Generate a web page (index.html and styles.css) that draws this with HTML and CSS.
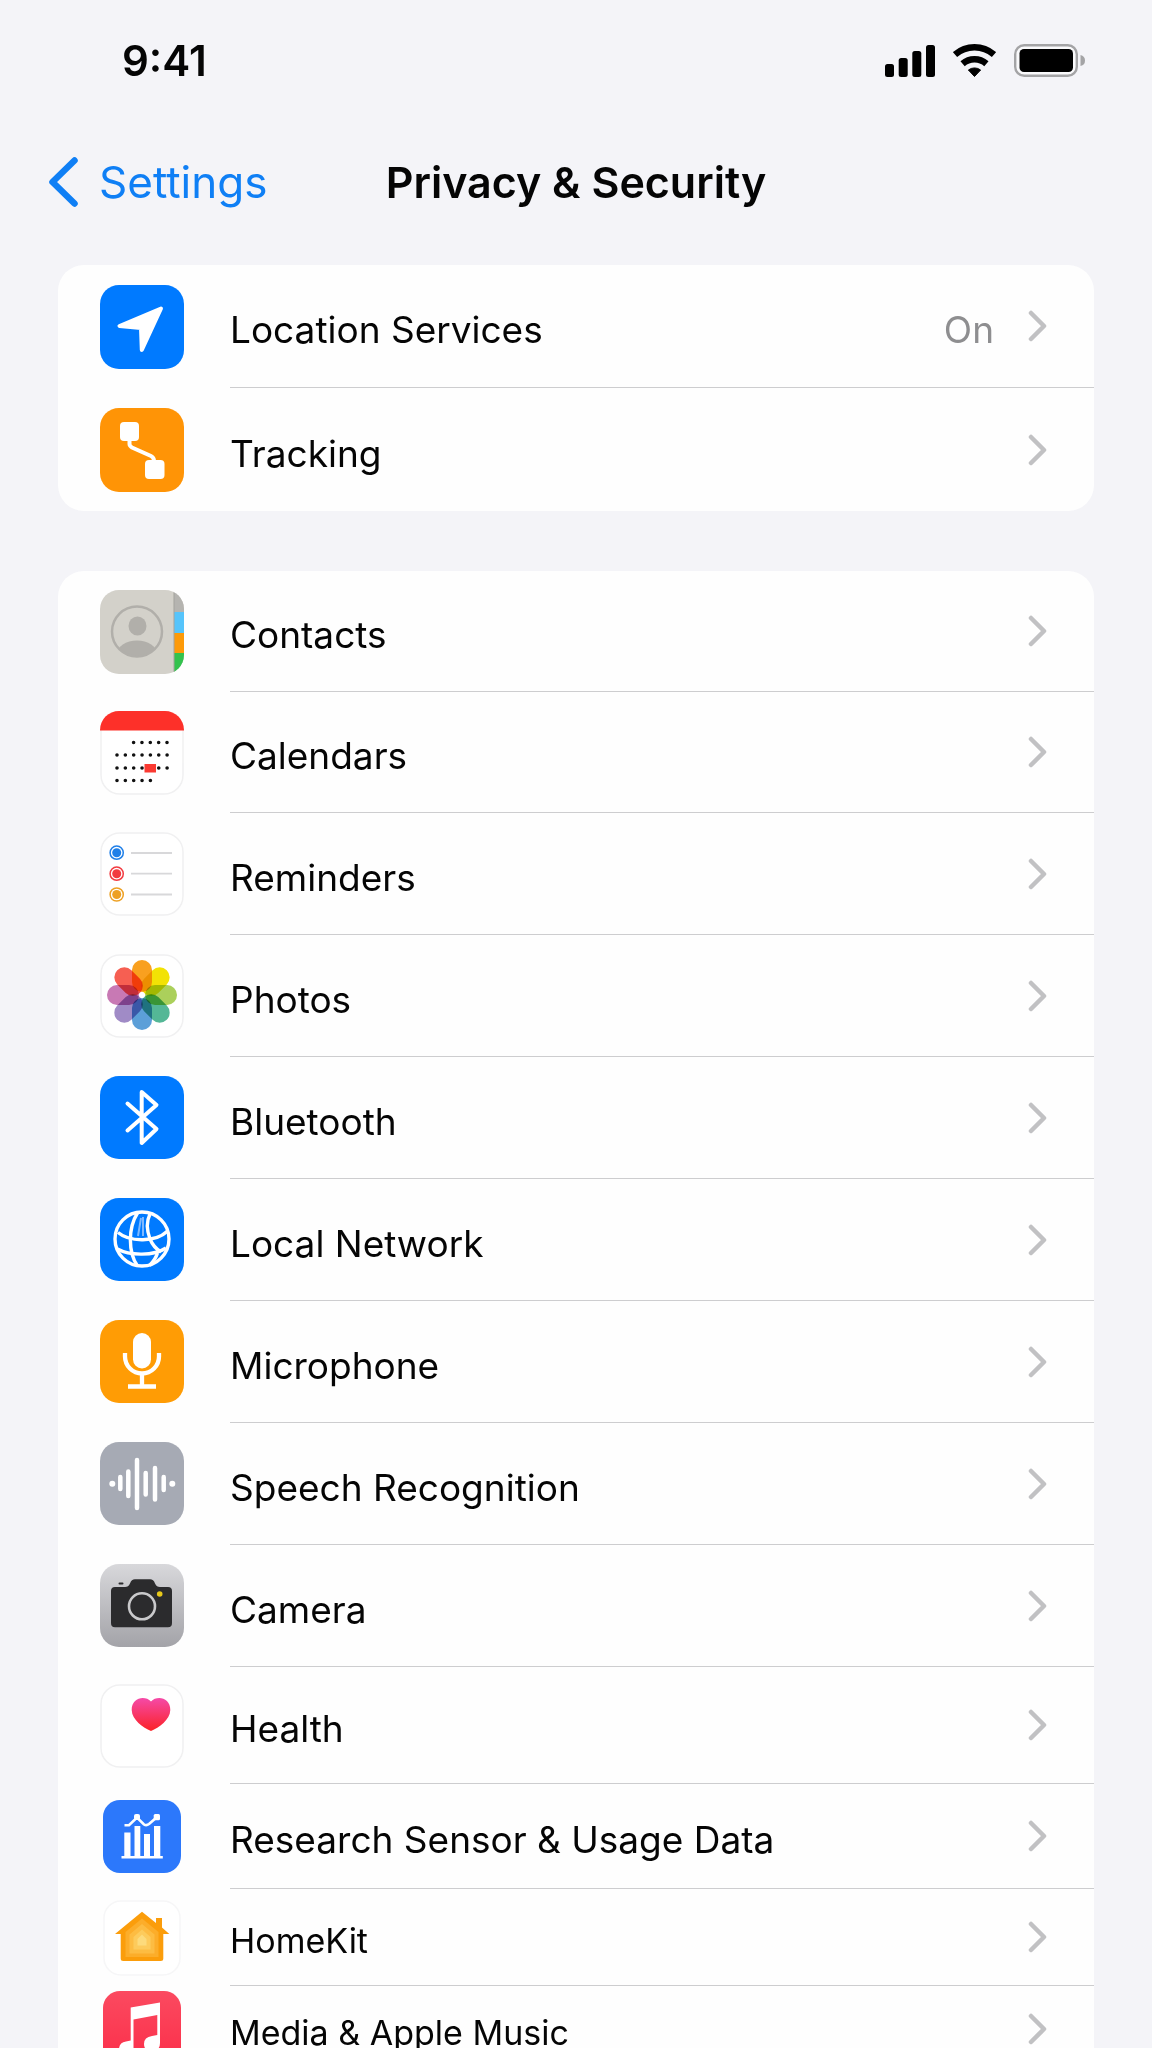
FILE: index.html
```html
<!DOCTYPE html>
<html lang="en">
<head>
    <meta charset="UTF-8">
    <meta name="viewport" content="width=device-width, initial-scale=1.0">
    <title>Privacy &amp; Security</title>
    <link rel="stylesheet" href="styles.css">
</head>
<body>
    <svg class="defs" aria-hidden="true">
        <symbol id="chevron" viewBox="0 0 20 32">
            <path d="M3 3 L16 16 L3 29" fill="none" stroke="#c1c1c3" stroke-width="4.500" stroke-linecap="round" stroke-linejoin="round"/>
        </symbol>
    </svg>

    <div class="status-bar">
        <span class="time">9:41</span>
        <div class="status-icons">
            <svg width="50" height="33" viewBox="0 0 50 33">
                <rect x="0" y="20" width="9" height="13" rx="2.5"/>
                <rect x="13.7" y="14" width="9" height="19" rx="2.5"/>
                <rect x="27.3" y="7" width="9" height="26" rx="2.5"/>
                <rect x="41" y="1" width="9" height="32" rx="2.5"/>
            </svg>
            <svg width="43" height="33" viewBox="0 0 43 33">
                <path d="M2 10.6 A29.7 29.7 0 0 1 41 10.6" fill="none" stroke="#000" stroke-width="6.5"/>
                <path d="M9.6 19.8 A18.2 18.2 0 0 1 33.4 19.8" fill="none" stroke="#000" stroke-width="6.5"/>
                <path d="M21.5 32.5 L15.4 26 A10 10 0 0 1 27.6 26 Z" stroke="#000" stroke-linejoin="round"/>
            </svg>
            <svg width="71" height="33" viewBox="0 0 71 33">
                <rect x="1.2" y="1.2" width="61.6" height="30.6" rx="9" fill="#fafafc" stroke="#a4a4a6" stroke-width="2.4"/>
                <rect x="5.5" y="5" width="53.5" height="23" rx="4.5"/>
                <path d="M66.5 11 Q71 12 71 16.500 Q71 21 66.500 22 Z" fill="#a4a4a6"/>
            </svg>
        </div>
    </div>

    <header class="nav">
        <a class="back" href="#">
            <svg width="32" height="52" viewBox="0 0 32 52">
                <path d="M27.500 4.500 L5.500 26 L27.500 47.500" fill="none" stroke="#0f7ff5" stroke-width="6.500" stroke-linecap="round" stroke-linejoin="round"/>
            </svg>
            <span>Settings</span>
        </a>
        <h1>Privacy &amp; Security</h1>
    </header>

    <main class="content">
        <div class="card card-top">
            <a class="row" href="#">
                <span class="icon">
                    <svg width="84" height="84" viewBox="0 0 84 84">
                        <rect width="84" height="84" rx="19" fill="#007aff"/>
                        <path d="M61 23.500 L19.500 41 L41 43 L41.800 65 Z" fill="#fff" stroke="#fff" stroke-width="4" stroke-linejoin="round"/>
                    </svg>
                </span>
                <span class="row-body">
                    <span class="label">Location Services</span>
                    <span class="value">On</span>
                    <svg class="chevron"><use href="#chevron"/></svg>
                </span>
            </a>
            <a class="row" href="#">
                <span class="icon">
                    <svg width="84" height="84" viewBox="0 0 84 84">
                        <rect width="84" height="84" rx="19" fill="#ff9406"/>
                        <rect x="20" y="14" width="19" height="19" rx="4" fill="#fff"/>
                        <rect x="45" y="52" width="19.500" height="19" rx="4" fill="#fff"/>
                        <path d="M29.500 32 V36 Q29.500 38 32 39.500 L51 48 Q54 49.500 54 53" fill="none" stroke="#fff" stroke-width="4"/>
                    </svg>
                </span>
                <span class="row-body">
                    <span class="label">Tracking</span>
                    <svg class="chevron"><use href="#chevron"/></svg>
                </span>
            </a>
        </div>

        <div class="card">
            <a class="row row-first" href="#">
                <span class="icon">
                    <svg width="84" height="84" viewBox="0 0 84 84">
                        <defs>
                            <clipPath id="contacts-shape"><rect width="84" height="84" rx="19"/></clipPath>
                            <clipPath id="avatar"><circle cx="37" cy="41.500" r="25"/></clipPath>
                        </defs>
                        <g clip-path="url(#contacts-shape)">
                            <rect width="84" height="84" fill="#d3d1ca"/>
                            <rect x="74" width="10" height="22" fill="#b5b4b0"/>
                            <rect x="74" y="22" width="10" height="21" fill="#56c4fb"/>
                            <rect x="74" y="43" width="10" height="20" fill="#fd9a09"/>
                            <rect x="74" y="63" width="10" height="21" fill="#33c24d"/>
                            <path d="M74 0 V84" stroke="#a3a29d" stroke-width="1"/>
                        </g>
                        <g clip-path="url(#avatar)" fill="#b1afaa">
                            <ellipse cx="37.500" cy="36" rx="9" ry="9.500"/>
                            <ellipse cx="37" cy="64" rx="20" ry="13.500"/>
                        </g>
                        <circle cx="37" cy="41.500" r="25" fill="none" stroke="#b1afaa" stroke-width="2.500"/>
                    </svg>
                </span>
                <span class="row-body">
                    <span class="label">Contacts</span>
                    <svg class="chevron"><use href="#chevron"/></svg>
                </span>
            </a>
            <a class="row row-first" href="#">
                <span class="icon">
                    <svg width="84" height="84" viewBox="0 0 84 84">
                        <rect x="1" y="1" width="82" height="82" rx="19" fill="#fff" stroke="#f0f0f1" stroke-width="1.500"/>
                        <path d="M0 19.500 V19 A19 19 0 0 1 19 0 H65 A19 19 0 0 1 84 19 V19.500 Z" fill="#fd3029"/>
                        <!-- day dots: round caps on zero-length dashes -->
                        <g fill="none" stroke="#111" stroke-width="3.600" stroke-linecap="round" stroke-dasharray="0 8.350">
                            <path d="M33.600 31.500 H67.500"/>
                            <path d="M17 44 H67.500"/>
                            <path d="M17 57 H67.500"/>
                            <path d="M17 69.500 H51"/>
                        </g>
                        <rect x="44.500" y="53" width="11.500" height="8.500" fill="#fa3a32"/>
                    </svg>
                </span>
                <span class="row-body">
                    <span class="label">Calendars</span>
                    <svg class="chevron"><use href="#chevron"/></svg>
                </span>
            </a>
            <a class="row" href="#">
                <span class="icon">
                    <svg width="84" height="84" viewBox="0 0 84 84">
                        <rect x="1" y="1" width="82" height="82" rx="19" fill="#fff" stroke="#f0f0f1" stroke-width="1.500"/>
                        <g fill="none" stroke-width="1.500">
                            <circle cx="16.700" cy="20.700" r="6.600" stroke="#1f7fe8"/>
                            <circle cx="16.700" cy="41.700" r="6.600" stroke="#f23a40"/>
                            <circle cx="16.700" cy="62.500" r="6.600" stroke="#eda023"/>
                        </g>
                        <circle cx="16.700" cy="20.700" r="4.500" fill="#1f7fe8"/>
                        <circle cx="16.700" cy="41.700" r="4.500" fill="#f23a40"/>
                        <circle cx="16.700" cy="62.500" r="4.500" fill="#eda023"/>
                        <path d="M31 21 H72 M31 41.700 H72 M31 62.500 H72" stroke="#d8d8da" stroke-width="1.800"/>
                    </svg>
                </span>
                <span class="row-body">
                    <span class="label">Reminders</span>
                    <svg class="chevron"><use href="#chevron"/></svg>
                </span>
            </a>
            <a class="row" href="#">
                <span class="icon">
                    <svg width="84" height="84" viewBox="0 0 84 84">
                        <rect x="1" y="1" width="82" height="82" rx="19" fill="#fff" stroke="#f0f0f1" stroke-width="1.500"/>
                        <g class="petals" transform="translate(42 41)">
                            <rect x="-10" y="-35" width="20" height="32" rx="10" fill="#f9a01f"/>
                            <rect x="-10" y="-35" width="20" height="32" rx="10" fill="#f2e205" transform="rotate(45)"/>
                            <rect x="-10" y="-35" width="20" height="32" rx="10" fill="#abd05b" transform="rotate(90)"/>
                            <rect x="-10" y="-35" width="20" height="32" rx="10" fill="#54b796" transform="rotate(135)"/>
                            <rect x="-10" y="-35" width="20" height="32" rx="10" fill="#5c9fd8" transform="rotate(180)"/>
                            <rect x="-10" y="-35" width="20" height="32" rx="10" fill="#a08bc6" transform="rotate(225)"/>
                            <rect x="-10" y="-35" width="20" height="32" rx="10" fill="#c879b4" transform="rotate(270)"/>
                            <rect x="-10" y="-35" width="20" height="32" rx="10" fill="#f65f52" transform="rotate(315)"/>
                        </g>
                    </svg>
                </span>
                <span class="row-body">
                    <span class="label">Photos</span>
                    <svg class="chevron"><use href="#chevron"/></svg>
                </span>
            </a>
            <a class="row" href="#">
                <span class="icon">
                    <svg width="84" height="84" viewBox="0 0 84 84">
                        <rect width="84" height="83" rx="19" fill="#007aff"/>
                        <path d="M27.500 27.500 L56.500 53 L41.700 67 V16 L56.500 29 L27.500 54.500" fill="none" stroke="#fff" stroke-width="4" stroke-linecap="round" stroke-linejoin="round"/>
                    </svg>
                </span>
                <span class="row-body">
                    <span class="label">Bluetooth</span>
                    <svg class="chevron"><use href="#chevron"/></svg>
                </span>
            </a>
            <a class="row" href="#">
                <span class="icon">
                    <svg width="84" height="84" viewBox="0 0 84 84">
                        <rect width="84" height="83" rx="19" fill="#007aff"/>
                        <g fill="none" stroke="#fff" stroke-width="3.400">
                            <circle cx="42" cy="41" r="27"/>
                            <path d="M37.500 15 C28 30 28 54 37.500 68"/>
                            <path d="M50 16 C45.500 25 47 33 50 41 C52.500 47 56 51 61 54"/>
                            <path d="M18 34.500 C30 44.500 56 44 67 33.500"/>
                            <path d="M17.500 51 C30 58 54 58 66 50"/>
                            <path d="M57.500 55 C56 60 53 64 49.500 67.500"/>
                        </g>
                        <path d="M41 20 L38 38 M43 19 V38" stroke="#7fb9ff" stroke-width="2" fill="none"/>
                    </svg>
                </span>
                <span class="row-body">
                    <span class="label">Local Network</span>
                    <svg class="chevron"><use href="#chevron"/></svg>
                </span>
            </a>
            <a class="row" href="#">
                <span class="icon">
                    <svg width="84" height="84" viewBox="0 0 84 84">
                        <rect width="84" height="83" rx="19" fill="#ff9c05"/>
                        <rect x="33" y="13" width="18" height="35.500" rx="9" fill="#fff"/>
                        <path d="M25 33 V36.500 A17 17 0 0 0 59 36.500 V33 M42 53 V66 M28 66.500 H56" fill="none" stroke="#fff" stroke-width="4.300"/>
                    </svg>
                </span>
                <span class="row-body">
                    <span class="label">Microphone</span>
                    <svg class="chevron"><use href="#chevron"/></svg>
                </span>
            </a>
            <a class="row" href="#">
                <span class="icon">
                    <svg width="84" height="84" viewBox="0 0 84 84">
                        <rect width="84" height="83" rx="19" fill="#a6aab4"/>
                        <path d="M20.300 35 V47 M28.300 29.500 V54 M37 18 V66 M45.700 31 V52.500 M55 26 V57.500 M63.700 35 V48" stroke="#fff" stroke-width="4.500" stroke-linecap="round"/>
                        <circle cx="12.300" cy="41.700" r="3" fill="#fff"/>
                        <circle cx="72.300" cy="41.700" r="3" fill="#fff"/>
                    </svg>
                </span>
                <span class="row-body">
                    <span class="label">Speech Recognition</span>
                    <svg class="chevron"><use href="#chevron"/></svg>
                </span>
            </a>
            <a class="row" href="#">
                <span class="icon">
                    <svg width="84" height="84" viewBox="0 0 84 84">
                        <defs>
                            <linearGradient id="camera-bg" x1="0" y1="0" x2="0" y2="1">
                                <stop offset="0" stop-color="#d8d8db"/>
                                <stop offset="1" stop-color="#a3a3a8"/>
                            </linearGradient>
                        </defs>
                        <rect width="84" height="83" rx="19" fill="url(#camera-bg)"/>
                        <path d="M11 27 Q11 23 15 23 H25 Q28.500 23 30 19.500 Q31.500 15.300 35 15.300 H50 Q53.500 15.300 55 19.500 Q56.500 23 60 23 H68 Q72 23 72 27 V59 Q72 63.300 68 63.300 H15 Q11 63.300 11 59 Z" fill="#2b2b2d"/>
                        <rect x="18.500" y="18.500" width="5" height="2" rx="1" fill="#2b2b2d"/>
                        <circle cx="42" cy="42.300" r="13" fill="none" stroke="#c9c9cb" stroke-width="2.600"/>
                        <circle cx="59.700" cy="30" r="2.800" fill="#e8c91a"/>
                    </svg>
                </span>
                <span class="row-body">
                    <span class="label">Camera</span>
                    <svg class="chevron"><use href="#chevron"/></svg>
                </span>
            </a>
            <a class="row row-health" href="#">
                <span class="icon">
                    <svg width="84" height="84" viewBox="0 0 84 84">
                        <defs>
                            <linearGradient id="heart" x1="0" y1="0" x2="0" y2="1">
                                <stop offset="0" stop-color="#f54aa8"/>
                                <stop offset="1" stop-color="#fb2226"/>
                            </linearGradient>
                        </defs>
                        <rect x="1" y="1" width="82" height="82" rx="19" fill="#fff" stroke="#f0f0f1" stroke-width="1.500"/>
                        <path d="M51 17.500 C45 11 31.500 13.500 31.700 26 C32 36 43 43.500 51 47 C59 43.500 70 36 70.300 26 C70.500 13.500 57 11 51 17.500 Z" fill="url(#heart)"/>
                    </svg>
                </span>
                <span class="row-body">
                    <span class="label">Health</span>
                    <svg class="chevron"><use href="#chevron"/></svg>
                </span>
            </a>
            <a class="row row-research" href="#">
                <span class="icon">
                    <svg width="78" height="73" viewBox="0 0 78 73">
                        <rect width="78" height="73" rx="17" fill="#2c78fb"/>
                        <path d="M21.300 56 V32.500 H27.500 V56 Z M31.500 56 V26 H37.300 V56 Z M41 56 V34 H47 V56 Z M51 56 V26 H57.300 V56 Z M18.500 56 H59.800 V58.500 H18.500 Z" fill="#fff"/>
                        <path d="M21.500 25.300 H26 L34 17.500 L41 24.500 Q43.500 26 46 24 L53.500 17.500" fill="none" stroke="#fff" stroke-width="2.600"/>
                        <rect x="31" y="14" width="6" height="6" rx="2" fill="#fff"/>
                        <rect x="50.700" y="14" width="6.300" height="6.300" rx="1.500" fill="#fff"/>
                    </svg>
                </span>
                <span class="row-body">
                    <span class="label">Research Sensor &amp; Usage Data</span>
                    <svg class="chevron"><use href="#chevron"/></svg>
                </span>
            </a>
            <a class="row row-small" href="#">
                <span class="icon">
                    <svg width="78" height="76" viewBox="0 0 78 76">
                        <rect x="1" y="1" width="76" height="74" rx="17" fill="#fff" stroke="#f6f6f7" stroke-width="1.500"/>
                        <path d="M39 11.700 L53 23 V18 H59 V27.500 L66.300 34 H60.300 V58.500 Q60.300 61 57.800 61 H20.200 Q17.700 61 17.700 58.500 V34 H12 Z" fill="#fb9d0b"/>
                        <path d="M39 18.500 L55.500 32 V57 H22.500 V32 Z" fill="#fcad2a"/>
                        <path d="M39 24 L51.500 34.500 V53.500 H26.500 V34.500 Z" fill="#fdbc42"/>
                        <path d="M39 29.500 L47.500 37 V49.500 H30.500 V37 Z" fill="#fdcb5c"/>
                        <path d="M39 34.500 L43.500 39 V45.500 H34.500 V39 Z" fill="#fddb7c"/>
                    </svg>
                </span>
                <span class="row-body">
                    <span class="label">HomeKit</span>
                    <svg class="chevron"><use href="#chevron"/></svg>
                </span>
            </a>
            <a class="row row-small row-last" href="#">
                <span class="icon">
                    <svg width="78" height="76" viewBox="0 0 78 76">
                        <defs>
                            <linearGradient id="music-bg" x1="0" y1="0" x2="0" y2="1">
                                <stop offset="0" stop-color="#fb4a60"/>
                                <stop offset="1" stop-color="#fb2d48"/>
                            </linearGradient>
                        </defs>
                        <rect width="78" height="76" rx="17" fill="url(#music-bg)"/>
                        <path d="M27.700 16.500 L57 11.500 V52 Q57 60 48.500 60 Q41 60 41 53 Q41 46 49 45 L54.300 44 V24 L30.500 28.500 V57 Q30.500 65 23 65 Q16 65 16 58.500 Q16 51.500 23 50.500 L27.700 49.500 Z" fill="#fff"/>
                    </svg>
                </span>
                <span class="row-body">
                    <span class="label">Media &amp; Apple Music</span>
                    <svg class="chevron"><use href="#chevron"/></svg>
                </span>
            </a>
        </div>
    </main>
</body>
</html>
```
FILE: styles.css
```css
* {
    box-sizing: border-box;
}

body {
    margin: 0;
    height: 100vh;
    display: flex;
    flex-direction: column;
    overflow: hidden;
    font-family: Inter, "Liberation Sans", sans-serif;
    background-color: #f4f4f8;
    color: #050505;
}

a {
    color: inherit;
    text-decoration: none;
}

svg {
    display: block;
    flex: none;
}

.defs {
    position: absolute;
    width: 0;
    height: 0;
}

/* Status bar */
.status-bar {
    display: flex;
    flex: none;
    justify-content: space-between;
    align-items: center;
    height: 120px;
    padding: 0 67px 0 122px;
}

.time {
    font-size: 42px;
    font-weight: 600;
}

.status-icons {
    display: flex;
    gap: 18px;
}

/* Navigation */
.nav {
    display: grid;
    flex: none;
    grid-template-columns: 1fr auto 1fr;
    align-items: center;
    height: 124px;
    padding: 0 47px;
}

.back {
    display: flex;
    align-items: center;
    gap: 20px;
    font-size: 44px;
    color: #0f7ff5;
}

.nav h1 {
    margin: 0;
    font-size: 43px;
    font-weight: 600;
}

/* Lists */
.content {
    flex: 1;
    min-height: 0;
    overflow-y: auto;
    scrollbar-width: none;
    padding: 21px 58px;
}

.card {
    margin-bottom: 60px;
    border-radius: 26px;
    background-color: #fefefe;
    overflow: hidden;
}

.row {
    display: flex;
    height: 122px;
    padding-left: 42px;
    font-size: 37px;
}

.card-top .row {
    height: 123px;
}

.icon {
    display: flex;
    justify-content: center;
    align-items: center;
    width: 84px;
    margin-right: 46px;
}

.row-body {
    display: flex;
    flex: 1;
    align-items: center;
    padding-right: 46px;
    border-bottom: 1px solid #cdcdcf;
}

.row:last-child .row-body {
    border-bottom: none;
}

.label {
    flex: 1;
    padding-top: 7px;
}

.value {
    padding-top: 7px;
    margin-right: 34px;
    color: #8e8e90;
}

.chevron {
    width: 20px;
    height: 32px;
}

.row-first {
    height: 121px;
}

.row-health {
    height: 117px;
}

.row-research {
    height: 105px;
}

.row-small {
    height: 97px;
    font-size: 34px;
}

.row-last {
    height: 86px;
}

.petals rect {
    mix-blend-mode: multiply;
}
```
